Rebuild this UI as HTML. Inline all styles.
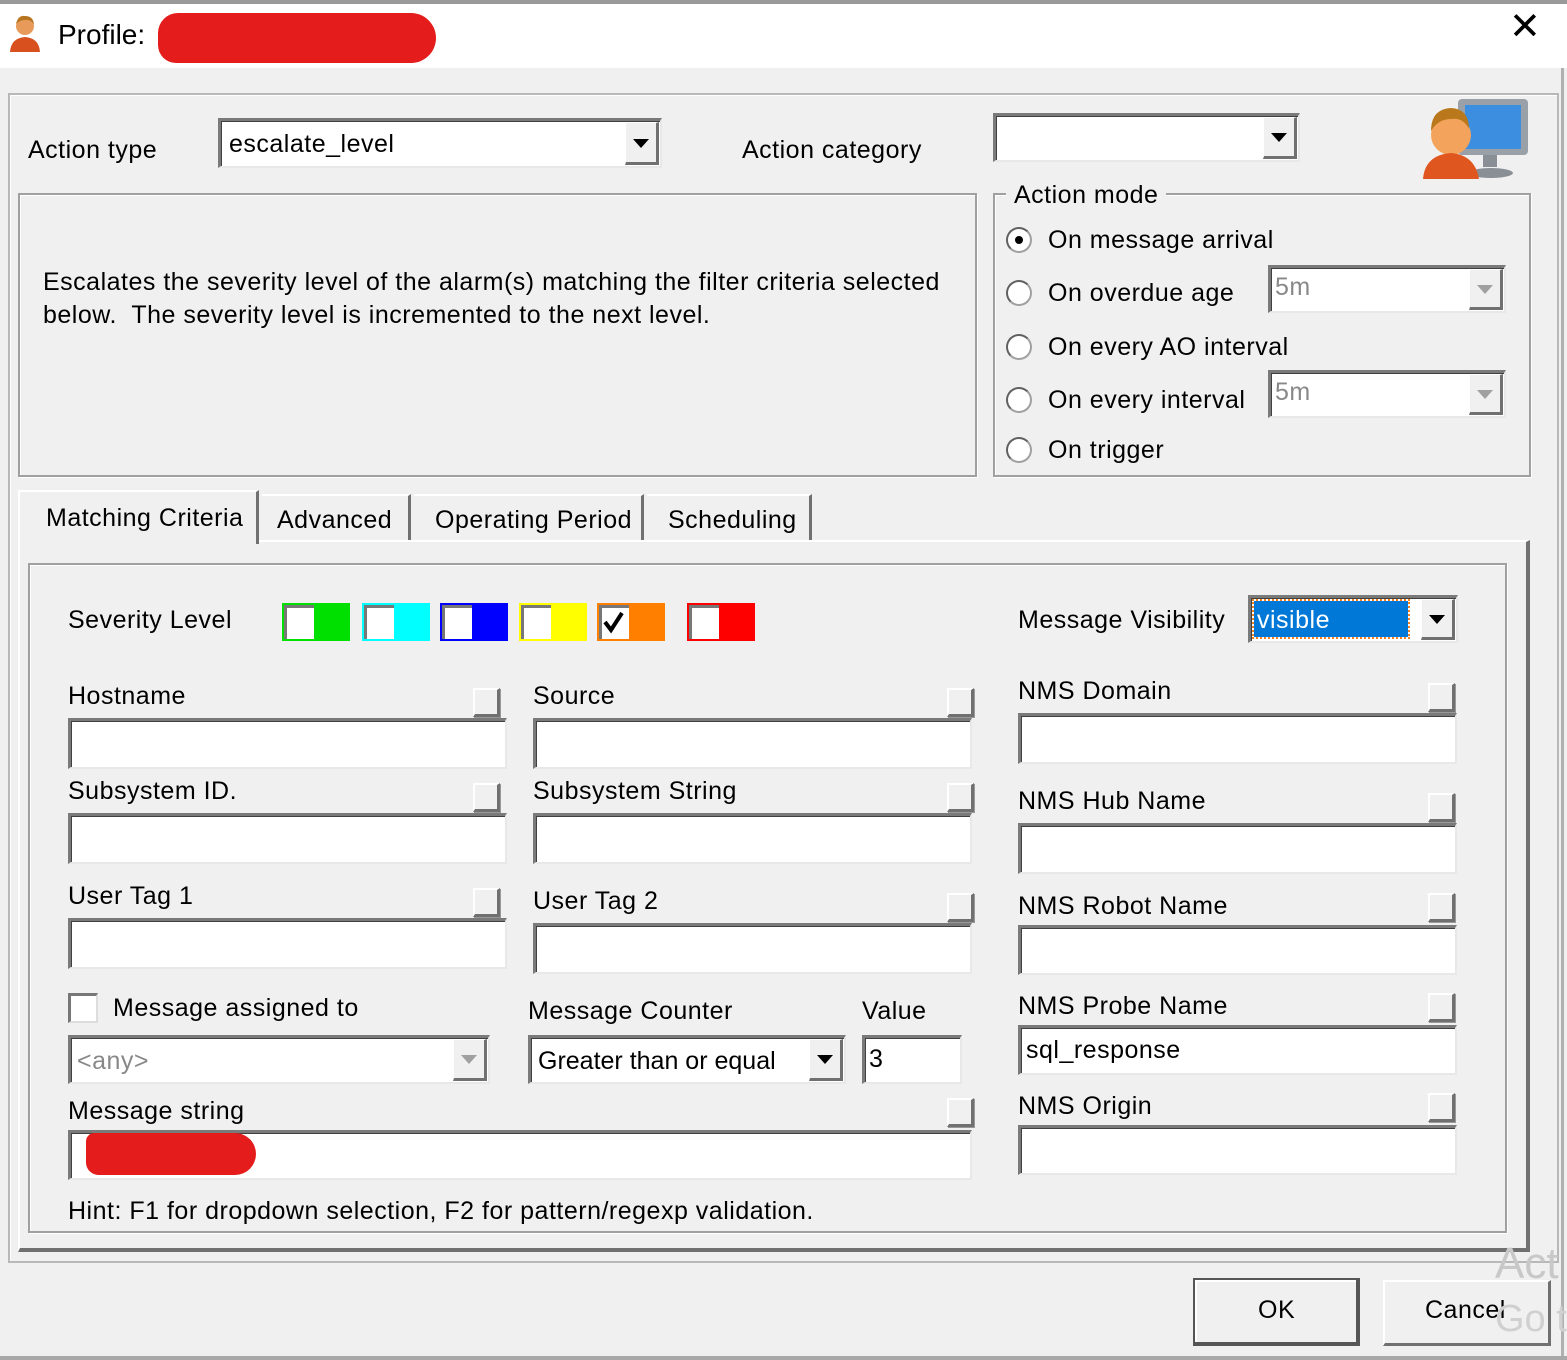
<!DOCTYPE html>
<html><head><meta charset="utf-8"><style>
*{box-sizing:border-box;margin:0;padding:0}
body{width:1567px;height:1360px;background:#f0f0f0;position:relative;overflow:hidden;font-family:"Liberation Sans",sans-serif;color:#000}
.a{position:absolute}
.t{position:absolute;font-size:25px;line-height:26px;white-space:nowrap;letter-spacing:0.5px}
.f{position:absolute;background:#fff;border-top:3px solid #7a7a7a;border-left:3px solid #7a7a7a;border-right:2px solid #e8e8e8;border-bottom:2px solid #e8e8e8;box-shadow:inset 1px 1px 0 #404040}
.btn{position:absolute;width:34px;top:1px;bottom:1px;right:1px;background:#f0f0f0;border-right:3px solid #707070;border-bottom:3px solid #707070;border-top:1px solid #fff;border-left:1px solid #fff}
.btn:after{content:"";position:absolute;left:50%;top:50%;margin:-4px 0 0 -8px;border-left:8px solid transparent;border-right:8px solid transparent;border-top:9px solid #000}
.btn.g:after{border-top-color:#a0a0a0}
.cb{position:absolute;width:27px;height:29px;background:#f0f0f0;border-right:3px solid #707070;border-bottom:3px solid #707070;border-top:2px solid #fff;border-left:2px solid #fff;box-shadow:1px 1px 0 #999}
.grp{position:absolute;border:2px solid #a0a0a0;box-shadow:inset 1px 1px 0 #fff,1px 1px 0 #fff}
.rad{position:absolute;width:26px;height:26px;border-radius:50%;background:#fff;border:2px solid #a0a0a0;border-top-color:#606060;border-left-color:#606060}
.sw{position:absolute;width:68px;height:38px}
.sw i{position:absolute;left:2px;top:2px;width:30px;height:34px;background:#fff;border-top:3px solid #777;border-left:3px solid #777}
</style></head><body>
<div class="a" style="left:0;top:0;width:1567px;height:68px;background:#fff;border-top:4px solid #9a9a9a"></div>
<svg class="a" style="left:8px;top:14px" width="34" height="40" viewBox="0 0 34 40"><circle cx="17" cy="12" r="9" fill="#e79a5a"/><path d="M8 10 Q10 1 17 2 Q25 2 26 10 Q22 5 17 6 Q12 6 8 10Z" fill="#b8751f"/><path d="M2 38 Q3 24 17 23 Q31 24 32 38Z" fill="#d8501e"/></svg>
<div class="t" style="left:58px;top:21px;font-size:28px;line-height:28px;letter-spacing:0">Profile:</div>
<div class="a" style="left:158px;top:13px;width:278px;height:50px;background:#e51c1c;border-radius:20px 25px 25px 18px"></div>
<div class="t" style="left:1509px;top:14px;font-size:38px;font-weight:300">✕</div>
<div class="a" style="left:8px;top:93px;width:1551px;height:1170px;border:2px solid #b8b8b8;box-shadow:inset 1px 1px 0 #fff"></div>
<div class="a" style="left:1561px;top:68px;width:3px;height:1292px;background:#b0b0b0"></div>
<div class="a" style="left:0;top:1356px;width:1567px;height:4px;background:#a8a8a8"></div>
<div class="t" style="left:28px;top:137px">Action type</div>
<div class="f" style="left:218px;top:118px;width:444px;height:50px"><div class="t" style="left:8px;top:10px">escalate_level</div><div class="btn"></div></div>
<div class="t" style="left:742px;top:137px">Action category</div>
<div class="f" style="left:993px;top:113px;width:307px;height:49px"><div class="btn"></div></div>
<svg class="a" style="left:1423px;top:95px" width="110" height="85" viewBox="0 0 110 85"><rect x="35" y="4" width="70" height="56" rx="4" fill="#9aa0a8"/><rect x="42" y="10" width="56" height="44" fill="#3b8ee0"/><rect x="60" y="60" width="14" height="12" fill="#8a8f96"/><ellipse cx="68" cy="78" rx="22" ry="5" fill="#8a8f96"/><circle cx="28" cy="40" r="20" fill="#f3a35c"/><path d="M8 36 Q8 14 28 13 Q46 14 46 34 Q40 22 28 24 Q15 24 8 36Z" fill="#b9781c"/><path d="M0 84 Q2 60 28 58 Q52 60 56 84Z" fill="#e0561f"/></svg>
<div class="grp" style="left:18px;top:193px;width:959px;height:284px"></div>
<div class="t" style="left:43px;top:266px;line-height:33px">Escalates the severity level of the alarm(s) matching the filter criteria selected<br>below.&nbsp; The severity level is incremented to the next level.</div>
<div class="grp" style="left:993px;top:193px;width:538px;height:284px"></div>
<div class="t" style="left:1006px;top:182px;background:#f0f0f0;padding:0 8px">Action mode</div>
<div class="rad" style="left:1006px;top:227px"><div class="a" style="left:7px;top:7px;width:8px;height:8px;border-radius:50%;background:#000"></div></div>
<div class="t" style="left:1048px;top:227px">On message arrival</div>
<div class="rad" style="left:1006px;top:280px"></div><div class="t" style="left:1048px;top:280px">On overdue age</div>
<div class="f" style="left:1268px;top:265px;width:238px;height:48px"><div class="t" style="left:4px;top:6px;color:#888">5m</div><div class="btn g"></div></div>
<div class="rad" style="left:1006px;top:334px"></div><div class="t" style="left:1048px;top:334px">On every AO interval</div>
<div class="rad" style="left:1006px;top:387px"></div><div class="t" style="left:1048px;top:387px">On every interval</div>
<div class="f" style="left:1268px;top:370px;width:238px;height:48px"><div class="t" style="left:4px;top:6px;color:#888">5m</div><div class="btn g"></div></div>
<div class="rad" style="left:1006px;top:437px"></div><div class="t" style="left:1048px;top:437px">On trigger</div>
<div class="a" style="left:18px;top:540px;width:1512px;height:712px;border-top:2px solid #fff;border-left:2px solid #fff;border-right:4px solid #707070;border-bottom:4px solid #707070"></div>
<div class="a" style="left:18px;top:490px;width:241px;height:54px;background:#f0f0f0;border-top:2px solid #fff;border-left:2px solid #fff;border-right:3px solid #707070"></div>
<div class="t" style="left:46px;top:505px">Matching Criteria</div>
<div class="a" style="left:262px;top:494px;width:149px;height:46px;border-top:2px solid #fff;border-right:3px solid #707070"></div>
<div class="t" style="left:277px;top:507px">Advanced</div>
<div class="a" style="left:414px;top:494px;width:230px;height:46px;border-top:2px solid #fff;border-right:3px solid #707070"></div>
<div class="t" style="left:435px;top:507px">Operating Period</div>
<div class="a" style="left:647px;top:494px;width:165px;height:46px;border-top:2px solid #fff;border-right:3px solid #707070"></div>
<div class="t" style="left:668px;top:507px">Scheduling</div>
<div class="grp" style="left:28px;top:563px;width:1479px;height:670px"></div>
<div class="t" style="left:68px;top:607px">Severity Level</div>
<div class="sw" style="left:282px;top:603px;background:#00e000"><i></i></div>
<div class="sw" style="left:362px;top:603px;background:#00ffff"><i></i></div>
<div class="sw" style="left:440px;top:603px;background:#0000ff"><i></i></div>
<div class="sw" style="left:519px;top:603px;background:#ffff00"><i></i></div>
<div class="sw" style="left:597px;top:603px;background:#ff8000"><i><svg width="24" height="28" viewBox="0 0 24 28"><path d="M3 14 L9 22 L20 5" stroke="#000" stroke-width="4" fill="none"/></svg></i></div>
<div class="sw" style="left:687px;top:603px;background:#ff0000"><i></i></div>
<div class="t" style="left:1018px;top:607px">Message Visibility</div>
<div class="f" style="left:1248px;top:595px;width:210px;height:48px"><div class="a" style="left:3px;top:3px;width:154px;height:36px;background:#0078d7;outline:2px dotted #f08020"></div><div class="t" style="left:6px;top:9px;color:#fff">visible</div><div class="btn"></div></div>
<div class="t" style="left:68px;top:683px">Hostname</div><div class="cb" style="left:473px;top:688px"></div>
<div class="f" style="left:68px;top:718px;width:439px;height:51px"></div>
<div class="t" style="left:68px;top:778px">Subsystem ID.</div><div class="cb" style="left:473px;top:783px"></div>
<div class="f" style="left:68px;top:813px;width:439px;height:51px"></div>
<div class="t" style="left:68px;top:883px">User Tag 1</div><div class="cb" style="left:473px;top:888px"></div>
<div class="f" style="left:68px;top:918px;width:439px;height:51px"></div>
<div class="t" style="left:533px;top:683px">Source</div><div class="cb" style="left:947px;top:688px"></div>
<div class="f" style="left:533px;top:718px;width:439px;height:51px"></div>
<div class="t" style="left:533px;top:778px">Subsystem String</div><div class="cb" style="left:947px;top:783px"></div>
<div class="f" style="left:533px;top:813px;width:439px;height:51px"></div>
<div class="t" style="left:533px;top:888px">User Tag 2</div><div class="cb" style="left:947px;top:893px"></div>
<div class="f" style="left:533px;top:923px;width:439px;height:51px"></div>
<div class="t" style="left:1018px;top:678px">NMS Domain</div><div class="cb" style="left:1428px;top:683px"></div>
<div class="f" style="left:1018px;top:713px;width:439px;height:51px"></div>
<div class="t" style="left:1018px;top:788px">NMS Hub Name</div><div class="cb" style="left:1428px;top:793px"></div>
<div class="f" style="left:1018px;top:823px;width:439px;height:51px"></div>
<div class="t" style="left:1018px;top:893px">NMS Robot Name</div><div class="cb" style="left:1428px;top:893px"></div>
<div class="f" style="left:1018px;top:925px;width:439px;height:50px"></div>
<div class="t" style="left:1018px;top:993px">NMS Probe Name</div><div class="cb" style="left:1428px;top:993px"></div>
<div class="f" style="left:1018px;top:1025px;width:439px;height:50px"><div class="t" style="left:5px;top:9px">sql_response</div></div>
<div class="t" style="left:1018px;top:1093px">NMS Origin</div><div class="cb" style="left:1428px;top:1093px"></div>
<div class="f" style="left:1018px;top:1125px;width:439px;height:50px"></div>
<div class="a" style="left:68px;top:993px;width:30px;height:30px;background:#fff;border-top:3px solid #777;border-left:3px solid #777;border-right:2px solid #ddd;border-bottom:2px solid #ddd"></div>
<div class="t" style="left:113px;top:995px">Message assigned to</div>
<div class="f" style="left:68px;top:1035px;width:422px;height:49px"><div class="t" style="left:6px;top:10px;color:#888">&lt;any&gt;</div><div class="btn g"></div></div>
<div class="t" style="left:528px;top:998px">Message Counter</div>
<div class="f" style="left:528px;top:1035px;width:318px;height:49px"><div class="t" style="left:7px;top:10px;letter-spacing:0">Greater than or equal</div><div class="btn"></div></div>
<div class="t" style="left:862px;top:998px">Value</div>
<div class="f" style="left:862px;top:1035px;width:100px;height:49px"><div class="t" style="left:4px;top:8px">3</div></div>
<div class="t" style="left:68px;top:1098px">Message string</div><div class="cb" style="left:947px;top:1098px"></div>
<div class="f" style="left:68px;top:1130px;width:904px;height:50px"><div class="a" style="left:15px;top:0;width:170px;height:42px;background:#e51c1c;border-radius:12px 30px 30px 18px"></div></div>
<div class="t" style="left:68px;top:1198px">Hint: F1 for dropdown selection, F2 for pattern/regexp validation.</div>
<div class="a" style="left:1193px;top:1278px;width:167px;height:68px;border:2px solid #555;border-right:4px solid #555;border-bottom:4px solid #555;box-shadow:inset 2px 2px 0 #fff"></div>
<div class="t" style="left:1258px;top:1297px">OK</div>
<div class="a" style="left:1383px;top:1280px;width:168px;height:66px;border-top:2px solid #fff;border-left:2px solid #fff;border-right:3px solid #707070;border-bottom:3px solid #707070"></div>
<div class="t" style="left:1425px;top:1297px">Cancel</div>
<div class="t" style="left:1495px;top:1242px;font-size:44px;line-height:44px;color:#c8c8c8;letter-spacing:0">Act</div>
<div class="t" style="left:1495px;top:1300px;font-size:38px;line-height:38px;color:#d0d0d0;letter-spacing:0">Go t</div>
</body></html>
